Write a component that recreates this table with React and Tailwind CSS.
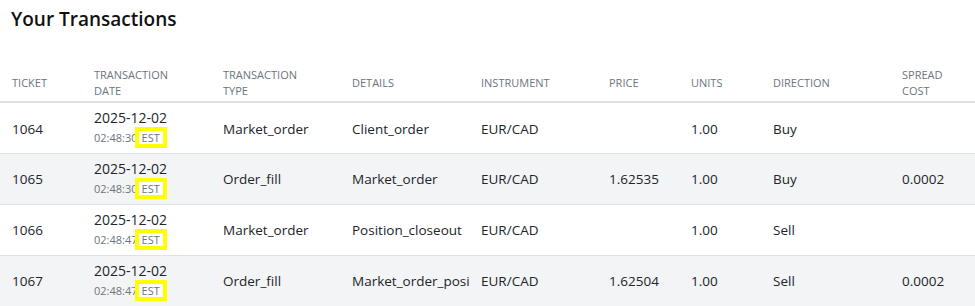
import React from "react";

const cols = [82, 129, 129, 129, 128, 82, 82, 129, 85];

const headers = [
  ["TICKET"],
  ["TRANSACTION", "DATE"],
  ["TRANSACTION", "TYPE"],
  ["DETAILS"],
  ["INSTRUMENT"],
  ["PRICE"],
  ["UNITS"],
  ["DIRECTION"],
  ["SPREAD", "COST"],
];

const rows = [
  { t: "1064", time: "02:48:30", type: "Market_order", det: "Client_order", price: "", dir: "Buy", spread: "" },
  { t: "1065", time: "02:48:30", type: "Order_fill", det: "Market_order", price: "1.62535", dir: "Buy", spread: "0.0002" },
  { t: "1066", time: "02:48:47", type: "Market_order", det: "Position_closeout", price: "", dir: "Sell", spread: "" },
  { t: "1067", time: "02:48:47", type: "Order_fill", det: "Market_order_position_closeout", price: "1.62504", dir: "Sell", spread: "0.0002" },
];

export default function App() {
  return (
    <div
      className="w-[975px] h-[306px] overflow-hidden bg-white text-[#212529]"
      style={{ fontFamily: '"Open Sans", "Noto Sans", sans-serif' }}
    >
      <h1 className="pl-[11px] pt-[5px] text-[19px] leading-[28px] font-semibold text-[#111]">
        Your Transactions
      </h1>
      <table className="mt-[31px] w-[975px] table-fixed border-collapse">
        <colgroup>
          {cols.map((w, i) => (
            <col key={i} style={{ width: w }} />
          ))}
        </colgroup>
        <thead>
          <tr className="border-b-2 border-[#dde0e6]">
            {headers.map((h, i) => (
              <th
                key={i}
                className="pl-[12px] pb-[2px] pt-[2px] text-left align-middle text-[11px] font-normal leading-[16px] text-[#6c757d] h-[38px]"
              >
                {h.map((l, j) => (
                  <div key={j}>{l}</div>
                ))}
              </th>
            ))}
          </tr>
        </thead>
        <tbody>
          {rows.map((r, i) => (
            <tr
              key={i}
              className={`border-b border-[#dde0e6] ${i % 2 === 1 ? "bg-[#f3f4f6]" : "bg-white"} h-[51px] text-[13.5px]`}
            >
              <td className="pl-[12px] align-middle pt-[2px]">{r.t}</td>
              <td className="pl-[12px] align-middle">
                <div className="leading-[18px] pt-[1px] text-[14px]">2025-12-02</div>
                <div className="flex items-center leading-[13px] text-[11px] text-[#6c757d]">
                  <span>{r.time}</span>
                  <span className="relative -ml-[3px] border-4 border-[#ffff00] bg-white/80 px-[3px] leading-[13px]">
                    EST
                  </span>
                </div>
              </td>
              <td className="pl-[12px] align-middle pt-[2px]">{r.type}</td>
              <td className="pl-[12px] align-middle pt-[2px] overflow-hidden whitespace-nowrap">
                {r.det}
              </td>
              <td className="pl-[12px] align-middle pt-[2px]">EUR/CAD</td>
              <td className="pl-[12px] align-middle pt-[2px]">{r.price}</td>
              <td className="pl-[12px] align-middle pt-[2px]">1.00</td>
              <td className="pl-[12px] align-middle pt-[2px]">{r.dir}</td>
              <td className="pl-[12px] align-middle pt-[2px]">{r.spread}</td>
            </tr>
          ))}
        </tbody>
      </table>
    </div>
  );
}
